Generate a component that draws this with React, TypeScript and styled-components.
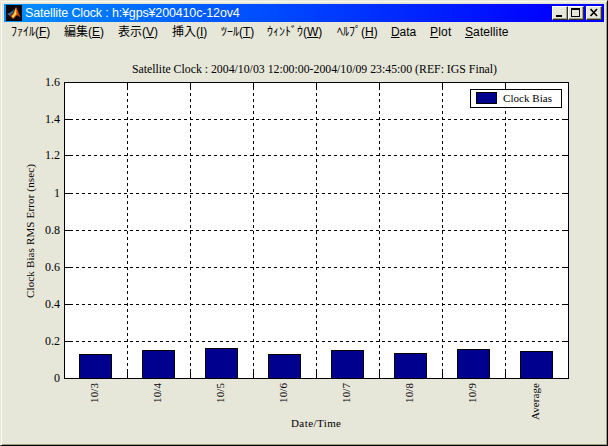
import React from 'react';
import styled, { createGlobalStyle } from 'styled-components';

const Global = createGlobalStyle`
  * { box-sizing: border-box; }
  body { margin: 0; background: #e6e6d9; overflow: hidden; }
`;

const Frame = styled.main`
  width: 608px;
  height: 446px;
  display: flex;
  flex-direction: column;
  padding: 2px 1px 1px 2px;
  background: #e6e6d9;
  border: 1px solid;
  border-color: #e6e6d9 #000 #000 #e6e6d9;
  box-shadow: inset 1px 1px #fbfbf2, inset -1px -1px #a0a078;
  font-family: "Liberation Sans", "Noto Sans CJK JP", sans-serif;
`;

const TitleBar = styled.header`
  display: flex;
  align-items: center;
  flex: none;
  height: 18px;
  margin: 1px 2px 0 1px;
  padding: 0 2px;
  background: linear-gradient(90deg, #0090ff, #0000ff 92%);
`;

const Title = styled.h1`
  flex: 1;
  margin: 0 0 0 3px;
  color: #fff;
  font-size: 12.5px;
  font-weight: 400;
  line-height: 18px;
  white-space: nowrap;
  letter-spacing: -0.15px;
`;

const Controls = styled.div`
  display: flex;
`;

const WindowButton = styled.button<{ $gap?: boolean }>`
  display: block;
  width: 16px;
  height: 14px;
  margin: 0 0 0 ${(p) => (p.$gap ? 2 : 0)}px;
  padding: 0;
  border: 1px solid;
  border-color: #fff #303030 #303030 #fff;
  background: #e6e6d9;
  box-shadow: inset -1px -1px #a0a088;
  svg { display: block; }
`;

const MenuBar = styled.nav`
  display: flex;
  flex: none;
  height: 20px;
  padding-left: 8px;
`;

const MenuItem = styled.span<{ $width: number; $spacing?: number }>`
  flex: none;
  width: ${(p) => p.$width}px;
  font-size: 12px;
  line-height: 20px;
  color: #000;
  white-space: nowrap;
  letter-spacing: ${(p) => p.$spacing ?? 0}px;
`;

const Key = styled.u`
  text-underline-offset: 1px;
  text-decoration-thickness: 1px;
  text-decoration-skip-ink: none;
`;

const Chart = styled.svg`
  display: block;
  flex: none;
  width: 600px;
  height: 400px;
  margin-left: 1px;
  font-family: "Liberation Serif", serif;
  font-size: 12px;
`;

const menus = [
  { pre: 'ﾌｧｲﾙ(', key: 'F', post: ')', width: 53, spacing: 0 },
  { pre: '編集(', key: 'E', post: ')', width: 54, spacing: 0 },
  { pre: '表示(', key: 'V', post: ')', width: 54, spacing: 0 },
  { pre: '挿入(', key: 'I', post: ')', width: 49, spacing: 0 },
  { pre: 'ﾂｰﾙ(', key: 'T', post: ')', width: 46, spacing: 0 },
  { pre: 'ｳｨﾝﾄﾞｳ(', key: 'W', post: ')', width: 70, spacing: 0 },
  { pre: 'ﾍﾙﾌﾟ(', key: 'H', post: ')', width: 54, spacing: 0 },
  { pre: '', key: 'D', post: 'ata', width: 39, spacing: -0.1 },
  { pre: '', key: 'P', post: 'lot', width: 35, spacing: 0.2 },
  { pre: '', key: 'S', post: 'atellite', width: 60, spacing: 0.1 },
];

const bars = [
  { label: '10/3', top: 354 },
  { label: '10/4', top: 350 },
  { label: '10/5', top: 348 },
  { label: '10/6', top: 354 },
  { label: '10/7', top: 350 },
  { label: '10/8', top: 353 },
  { label: '10/9', top: 349 },
  { label: 'Average', top: 351 },
];

const yTicks = [
  { label: '1.6', y: 82 },
  { label: '1.4', y: 119 },
  { label: '1.2', y: 155 },
  { label: '1', y: 193 },
  { label: '0.8', y: 230 },
  { label: '0.6', y: 267 },
  { label: '0.4', y: 304 },
  { label: '0.2', y: 341 },
  { label: '0', y: 378 },
];

const LEFT = 64;
const RIGHT = 568;
const TOP = 82;
const BOTTOM = 378;
const STEP = 63;

function MatlabIcon() {
  return (
    <svg width="16" height="16" viewBox="0 0 16 16">
      <rect width="16" height="16" fill="#07070c" />
      <path d="M1 9 5 7 8 4 7 8 4 11Z" fill="#386d91" />
      <path d="M4 11 7 8 10 2 9 8 6 13Z" fill="#a52b12" />
      <path d="M10 2 11 4 14 12 11 10 7 14 5 11 7 10Z" fill="#e66a14" />
      <path d="M10 3 10 9 7 13 6 11 8 9Z" fill="#ffe45a" />
      <path d="M11 4 15 13 12 10Z" fill="#a82810" />
    </svg>
  );
}

export default function App() {
  return (
    <>
      <Global />
      <Frame>
        <TitleBar>
          <MatlabIcon />
          <Title>Satellite Clock : h:¥gps¥200410c-12ov4</Title>
          <Controls>
            <WindowButton aria-label="Minimize">
              <svg width="14" height="12"><rect x="3" y="8" width="6" height="2" /></svg>
            </WindowButton>
            <WindowButton aria-label="Maximize">
              <svg width="14" height="12" shapeRendering="crispEdges">
                <path d="M2 1H11V10H2ZM3 3V9H10V3Z" fillRule="evenodd" />
              </svg>
            </WindowButton>
            <WindowButton aria-label="Close" $gap>
              <svg width="14" height="12"><path d="m3.5 2 6.5 7M10 2 3.5 9" stroke="#000" strokeWidth="1.6" /></svg>
            </WindowButton>
          </Controls>
        </TitleBar>
        <MenuBar>
          {menus.map((m) => (
            <MenuItem key={m.key} $width={m.width} $spacing={m.spacing}>
              {m.pre}<Key>{m.key}</Key>{m.post}
            </MenuItem>
          ))}
        </MenuBar>
        <Chart viewBox="4 42 600 400">
          <text x="132" y="73" textLength="365" lengthAdjust="spacingAndGlyphs">
            Satellite Clock : 2004/10/03 12:00:00-2004/10/09 23:45:00 (REF: IGS Final)
          </text>
          <g shapeRendering="crispEdges" stroke="#000" fill="none">
            <rect x={LEFT + 0.5} y={TOP + 0.5} width={RIGHT - LEFT} height={BOTTOM - TOP} fill="#fff" />
            {yTicks.slice(1, -1).map(({ y }) => (
              <g key={y}>
                <path d={`M${LEFT} ${y + 0.5}H${RIGHT}`} strokeDasharray="3 3" />
                <path d={`M${LEFT} ${y + 0.5}h6M${RIGHT} ${y + 0.5}h-5`} />
              </g>
            ))}
            {bars.slice(1).map(({ label }, i) => {
              const x = LEFT + STEP * (i + 1) + 0.5;
              return (
                <g key={label}>
                  <path d={`M${x} ${BOTTOM}V${TOP}`} strokeDasharray="3 3" />
                  <path d={`M${x} ${TOP}v6M${x} ${BOTTOM}v-7`} />
                </g>
              );
            })}
            {bars.map(({ label, top }, i) => (
              <rect key={label} x={79.5 + STEP * i} y={top + 0.5} width="32" height={BOTTOM - top} fill="#00008f" />
            ))}
            <rect x="470.5" y="89.5" width="91" height="18" fill="#fff" />
            <rect x="476.5" y="92.5" width="20" height="11" fill="#00008f" />
          </g>
          <text x="503" y="102" fontSize="11" textLength="49">Clock Bias</text>
          {yTicks.map(({ label, y }) => (
            <text key={label} x="60" y={y + 4} textAnchor="end">{label}</text>
          ))}
          {bars.map(({ label }, i) => (
            <text
              key={label}
              transform={`translate(${98 + STEP * i} ${i === 7 ? 420 : 403}) rotate(-90)`}
              fontSize="11"
              textLength={i === 7 ? 37 : 20}
            >
              {label}
            </text>
          ))}
          <text x="291" y="427" fontSize="11" textLength="50">Date/Time</text>
          <text transform="translate(34 298) rotate(-90)" fontSize="11" textLength="134">
            Clock Bias RMS Error (nsec)
          </text>
        </Chart>
      </Frame>
    </>
  );
}
